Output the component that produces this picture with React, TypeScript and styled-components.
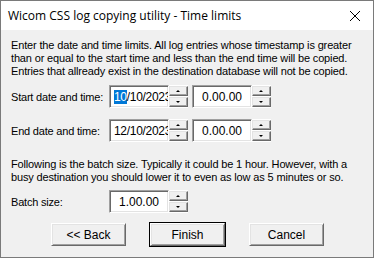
import React from "react"
import styled, { createGlobalStyle } from "styled-components"

const GlobalStyle = createGlobalStyle`
    html, body {
        margin: 0;
        padding: 0;
        background: #ffffff;
    }
    body {
        font-family: "Liberation Sans", Arial, sans-serif;
    }
`

const Window = styled.div`
    width: 374px;
    height: 258px;
    box-sizing: border-box;
    border: 1px solid #7a7a7a;
    display: flex;
    flex-direction: column;
    background: #f0f0f0;
    overflow: hidden;
`

const TitleBar = styled.div`
    height: 29px;
    flex: none;
    background: #ffffff;
    display: flex;
    align-items: center;
    justify-content: space-between;
    padding: 0 7px 0 7px;
    font-family: "Open Sans", "Liberation Sans", sans-serif;
    font-size: 12px;
    color: #000;
`

const CloseIcon = styled.svg`
    width: 12px;
    height: 12px;
    margin-right: 5px;
`

const Body = styled.div`
    flex: 1;
    display: flex;
    flex-direction: column;
    padding: 9px 0 0 10px;
    font-size: 11px;
    color: #000;
`

const Para = styled.p<{ $top?: number }>`
    margin: ${(p) => p.$top ?? 0}px 0 0 0;
    line-height: 13px;
    letter-spacing: -0.15px;
    white-space: nowrap;
`

const FieldRow = styled.div<{ $top: number }>`
    display: flex;
    align-items: center;
    height: 23px;
    margin-top: ${(p) => p.$top}px;
`

const Label = styled.div`
    width: 98px;
    flex: none;
    letter-spacing: -0.2px;
`

const Spin = styled.div<{ $gap?: number }>`
    display: flex;
    align-items: flex-start;
    height: 23px;
    margin-right: ${(p) => p.$gap ?? 0}px;
`

const Edit = styled.div<{ $w: number; $center?: boolean }>`
    width: ${(p) => p.$w}px;
    height: 23px;
    box-sizing: border-box;
    background: #fff;
    border-top: 1px solid #a0a0a0;
    border-left: 1px solid #a0a0a0;
    border-right: 1px solid #ffffff;
    border-bottom: 1px solid #ffffff;
    box-shadow: inset 1px 1px 0 #696969, inset -1px -1px 0 #e3e3e3;
    display: flex;
    align-items: center;
    justify-content: ${(p) => (p.$center ? "center" : "flex-start")};
    padding: 0 0 0 ${(p) => (p.$center ? 0 : 4)}px;
    font-size: 12px;
    letter-spacing: ${(p) => (p.$center ? 0 : -0.3)}px;
    white-space: nowrap;
    overflow: hidden;
`

const Sel = styled.span`
    background: #0078d7;
    color: #fff;
`

const Arrows = styled.div`
    display: flex;
    flex-direction: column;
    gap: 1px;
    padding-top: 1px;
    background: #fff;
    height: 23px;
    box-sizing: border-box;
    border-bottom: 1px solid #fff;
`

const ArrowBtn = styled.div`
    width: 19px;
    height: 10px;
    box-sizing: border-box;
    background: #f0f0f0;
    border-top: 1px solid #e3e3e3;
    border-left: 1px solid #e3e3e3;
    border-right: 1px solid #696969;
    border-bottom: 1px solid #696969;
    box-shadow: inset -1px -1px 0 #a0a0a0;
    display: flex;
    align-items: center;
    justify-content: center;
`

const Tri = styled.div<{ $up?: boolean }>`
    width: 0;
    height: 0;
    border-left: 2px solid transparent;
    border-right: 2px solid transparent;
    ${(p) => (p.$up ? "border-bottom: 2px solid #000;" : "border-top: 2px solid #000;")}
    margin-right: 1px;
`

const Buttons = styled.div`
    display: flex;
    gap: 24px;
    margin-top: 10px;
    padding-left: 40px;
`

const Button = styled.button<{ $default?: boolean }>`
    width: 75px;
    height: 23px;
    box-sizing: border-box;
    font-family: "Liberation Sans", Arial, sans-serif;
    font-size: 12px;
    color: #000;
    background: #f0f0f0;
    padding: 0;
    border-top: 1px solid #ffffff;
    border-left: 1px solid #ffffff;
    border-right: 1px solid #696969;
    border-bottom: 1px solid #696969;
    box-shadow: ${(p) =>
        p.$default
            ? "inset 1px 1px 0 #e3e3e3, inset -1px -1px 0 #a0a0a0, 0 0 0 1px #000"
            : "inset 1px 1px 0 #e3e3e3, inset -1px -1px 0 #a0a0a0"};
`

const Spinner: React.FC<{ children: React.ReactNode; w: number; center?: boolean; gap?: number }> = ({
    children,
    w,
    center,
    gap,
}) => (
    <Spin $gap={gap}>
        <Edit $w={w} $center={center}>
            {children}
        </Edit>
        <Arrows>
            <ArrowBtn>
                <Tri $up />
            </ArrowBtn>
            <ArrowBtn>
                <Tri />
            </ArrowBtn>
        </Arrows>
    </Spin>
)

export default function App(): JSX.Element {
    return (
        <>
            <GlobalStyle />
            <Window>
                <TitleBar>
                    <span>Wicom CSS log copying utility - Time limits</span>
                    <CloseIcon viewBox="0 0 12 12">
                        <path d="M1 1 L11 11 M11 1 L1 11" stroke="#000" strokeWidth="1" fill="none" />
                    </CloseIcon>
                </TitleBar>
                <Body>
                    <Para>
                        Enter the date and time limits. All log entries whose timestamp is greater
                        <br />
                        than or equal to the start time and less than the end time will be copied.
                        <br />
                        Entries that allready exist in the destination database will not be copied.
                    </Para>
                    <FieldRow $top={7}>
                        <Label>Start date and time:</Label>
                        <Spinner w={60} gap={4}>
                            <Sel>10</Sel>/10/2023
                        </Spinner>
                        <Spinner w={60} center>
                            0.00.00
                        </Spinner>
                    </FieldRow>
                    <FieldRow $top={11}>
                        <Label>End date and time:</Label>
                        <Spinner w={60} gap={4}>
                            12/10/2023
                        </Spinner>
                        <Spinner w={60} center>
                            0.00.00
                        </Spinner>
                    </FieldRow>
                    <Para $top={16}>
                        Following is the batch size. Typically it could be 1 hour. However, with a
                        <br />
                        busy destination you should lower it to even as low as 5 minutes or so.
                    </Para>
                    <FieldRow $top={6}>
                        <Label>Batch size:</Label>
                        <Spinner w={60} center>
                            1.00.00
                        </Spinner>
                    </FieldRow>
                    <Buttons>
                        <Button>&lt;&lt; Back</Button>
                        <Button $default>Finish</Button>
                        <Button>Cancel</Button>
                    </Buttons>
                </Body>
            </Window>
        </>
    )
}
